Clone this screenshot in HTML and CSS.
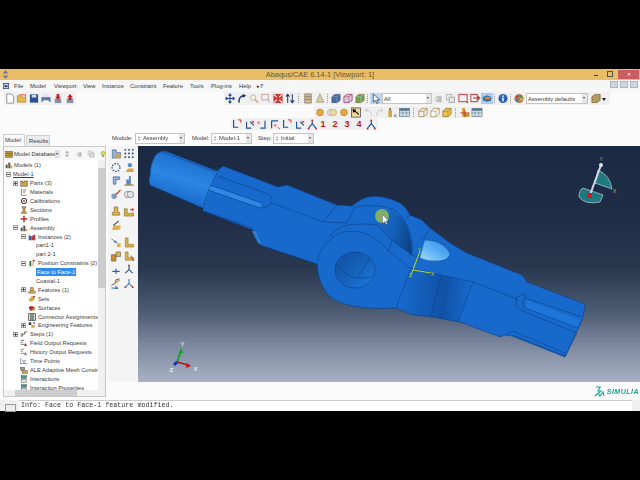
FILE: index.html
```html
<!DOCTYPE html>
<html lang="en">
<head>
<meta charset="utf-8">
<title>Abaqus/CAE</title>
<link rel="stylesheet" href="styles.css">
</head>
<body>
<svg class="defs" width="0" height="0">
<defs>
<symbol id="new" viewBox="0 0 12 12"><path d="M2.500 1h5l2.500 2.500V11h-7.500z" fill="#fff" stroke="#8a8f98"/></symbol>
<symbol id="open" viewBox="0 0 12 12"><path d="M1 3h4l1 1.500h4V10H1z" fill="#e9b949" stroke="#a67a1f" stroke-width=".7"/><path d="M3 2h7v2" fill="none" stroke="#d5482b"/></symbol>
<symbol id="save" viewBox="0 0 12 12"><rect x="1.500" y="1.500" width="9" height="9" fill="#2c4f92"/><rect x="3.500" y="2" width="5" height="3" fill="#cfd8ea"/></symbol>
<symbol id="print" viewBox="0 0 12 12"><rect x="1" y="4.500" width="10" height="5" fill="#5876aa"/><rect x="3" y="1.500" width="6" height="3" fill="#dfe4ee"/><rect x="3" y="8" width="6" height="2.500" fill="#fff"/></symbol>
<symbol id="imp" viewBox="0 0 12 12"><rect x="2.500" y="6" width="7" height="5" fill="#8a8fa8"/><path d="M4.500 1h3v3h1.500L6 7.500 3 4h1.500z" fill="#c8201f"/></symbol>
<symbol id="exp" viewBox="0 0 12 12"><rect x="2.500" y="6" width="7" height="5" fill="#8a8fa8"/><path d="M4.500 7.500h3v-3h1.500L6 1 3 4.500h1.500z" fill="#c8201f"/></symbol>
<symbol id="pan" viewBox="0 0 12 12"><path d="M6 1v10M1 6h10M6 1L4.500 3M6 1l1.500 2M6 11l-1.500-2M6 11l1.500-2M1 6l2-1.500M1 6l2 1.500M11 6L9 4.500M11 6L9 7.500" stroke="#1f3f8f" fill="none" stroke-width="1.100"/></symbol>
<symbol id="rot" viewBox="0 0 12 12"><path d="M3 10.500C2 6 4.500 3 8 3" stroke="#17306e" stroke-width="1.500" fill="none"/><path d="M7 .8l3.500 2.200L7 5.300z" fill="#17306e"/></symbol>
<symbol id="mag" viewBox="0 0 12 12"><circle cx="5" cy="5" r="3" fill="#f4f0dc" stroke="#b9b9b9"/><path d="M7 7l3.500 3.500" stroke="#c4a868" stroke-width="1.500"/></symbol>
<symbol id="box" viewBox="0 0 12 12"><rect x="1.500" y="1.500" width="7" height="6" fill="none" stroke="#c4a0a0"/><path d="M7 7l3.500 3.500" stroke="#b9b9b9" stroke-width="1.300"/></symbol>
<symbol id="fit" viewBox="0 0 12 12"><rect x="1" y="1" width="10" height="10" fill="#d33a33"/><path d="M1.500 1.500l3 3M10.500 1.500l-3 3M1.500 10.500l3-3M10.500 10.500l-3-3" stroke="#fff" stroke-width="1.200"/></symbol>
<symbol id="updn" viewBox="0 0 12 12"><path d="M3.500 11V2M1.500 4l2-2.500 2 2.500M8.500 1v9M6.500 8l2 2.500 2-2.500" stroke="#1d3774" fill="none" stroke-width="1.100"/></symbol>
<symbol id="bars" viewBox="0 0 12 12"><rect x="2.500" y="1" width="7" height="10" fill="#c9b896" stroke="#80704e" stroke-width=".7"/><path d="M2.500 4h7M2.500 7h7" stroke="#80704e" stroke-width=".7"/></symbol>
<symbol id="wedge" viewBox="0 0 12 12"><path d="M6 1l4 9H2z" fill="#dbcda8" stroke="#8f8468" stroke-width=".7"/></symbol>
<symbol id="cube1" viewBox="0 0 12 12"><path d="M1.500 4L5 1.500h5.500V8L7 10.500H1.500z" fill="#4d6aa3" stroke="#2d4170" stroke-width=".6"/><path d="M1.500 4H7v6.500M7 4l3.500-2.500" stroke="#9fb1d0" stroke-width=".5" fill="none"/></symbol>
<symbol id="cube2" viewBox="0 0 12 12"><path d="M1.500 4L5 1.500h5.500V8L7 10.500H1.500z" fill="#d8c6d8" stroke="#a3406f" stroke-width=".9"/><path d="M1.500 4H7v6.500M7 4l3.500-2.500" stroke="#a3406f" stroke-width=".6" fill="none"/></symbol>
<symbol id="cube3" viewBox="0 0 12 12"><path d="M1.500 4L5 1.500h5.500V8L7 10.500H1.500z" fill="#6ea05a" stroke="#8a6a2a" stroke-width=".7"/><path d="M1.500 4H7v6.500M7 4l3.500-2.500" stroke="#c8d8a0" stroke-width=".5" fill="none"/></symbol>
<symbol id="arrow" viewBox="0 0 12 12"><path d="M3 1v9l2.300-2 1.700 3.500 1.500-.7L6.800 7.500H10z" fill="#fff" stroke="#26344e" stroke-width=".8"/></symbol>
<symbol id="gray" viewBox="0 0 12 12"><rect x="4" y="3.500" width="6" height="6.500" fill="#bdbdbd"/><rect x="2" y="5" width="4" height="3" fill="#dcdcdc"/></symbol>
<symbol id="layers" viewBox="0 0 12 12"><rect x="1.500" y="1.500" width="6" height="6" fill="#efefef" stroke="#aaa" stroke-width=".8"/><rect x="4.500" y="4.500" width="6" height="6" fill="#e4e4e4" stroke="#999" stroke-width=".8"/></symbol>
<symbol id="rbox" viewBox="0 0 12 12"><rect x="1.500" y="1.500" width="9" height="8" fill="none" stroke="#bb3333"/><path d="M10 10.500h1.500" stroke="#333"/></symbol>
<symbol id="rboxa" viewBox="0 0 12 12"><rect x="1.500" y="1.500" width="7" height="8" fill="none" stroke="#bb3333"/><path d="M4 5.500h7M9 3.500l2 2-2 2" stroke="#b03020" stroke-width="1.100" fill="none"/></symbol>
<symbol id="eye" viewBox="0 0 12 12"><path d="M1 4.500L6 2.500l5 2-1 4-4 1-4-1z" fill="#3a6fa8"/><path d="M2.500 5.500L7 4l3 1.500-3 2z" fill="#e09030"/><path d="M4 7.500l5-.5" stroke="#c03030" stroke-width=".8"/></symbol>
<symbol id="info" viewBox="0 0 12 12"><circle cx="6" cy="6" r="5" fill="#2a63b4"/><rect x="5.200" y="5" width="1.600" height="4" fill="#fff"/><rect x="5.200" y="2.700" width="1.600" height="1.500" fill="#fff"/></symbol>
<symbol id="palette" viewBox="0 0 12 12"><path d="M1 6c0-3 2.500-5 5.500-5S11 3.500 11 6s-1.500 5-4.500 5S1 9 1 6z" fill="#a8845c"/><circle cx="4" cy="4" r="1.300" fill="#d83030"/><circle cx="7.500" cy="3.500" r="1.200" fill="#3a9a3a"/><circle cx="3.700" cy="7.500" r="1.200" fill="#2a5fc4"/><circle cx="8.500" cy="7" r="1.300" fill="#e8c030"/></symbol>
<symbol id="cubeb" viewBox="0 0 12 12"><path d="M1.500 4L5 1.500h5.500V8L7 10.500H1.500z" fill="#b39a5e" stroke="#6e5c30" stroke-width=".7"/></symbol>
<symbol id="ball" viewBox="0 0 12 12"><circle cx="6" cy="6" r="3.700" fill="#e8a63c" stroke="#a87820" stroke-width=".6"/></symbol>
<symbol id="balls" viewBox="0 0 12 12"><circle cx="4.500" cy="6" r="3.500" fill="#e0e0e0" stroke="#999" stroke-width=".6"/><circle cx="7.500" cy="6" r="3.500" fill="#f0d9a0" stroke="#b89640" stroke-width=".6"/></symbol>
<symbol id="pick" viewBox="0 0 12 12"><rect x="1" y="1" width="10" height="10" fill="#f2d79a" stroke="#444" stroke-width=".8"/><path d="M2.500 2.500L9 8M3 3l3 .3M3 3l.3 3" stroke="#111" stroke-width="1.300" fill="none"/></symbol>
<symbol id="undo" viewBox="0 0 12 12"><path d="M9.500 9.500C10 5 7 3 3 3.500M3 3.500l2-2M3 3.500l2 2" stroke="#c4c4c4" fill="none"/></symbol>
<symbol id="redo" viewBox="0 0 12 12"><path d="M2.500 9.500C2 5 5 3 9 3.500M9 3.500l-2-2M9 3.500l-2 2" stroke="#c4c4c4" fill="none"/></symbol>
<symbol id="bottle" viewBox="0 0 12 12"><rect x="2" y="4" width="4" height="7" fill="#d6a63e"/><rect x="3" y="1" width="2" height="3" fill="#8a6a2a"/><rect x="8" y="8" width="3" height="3" fill="#aaa"/></symbol>
<symbol id="grid" viewBox="0 0 12 12"><rect x=".5" y="1.500" width="11" height="9" fill="#d9e2ea" stroke="#627a8c" stroke-width=".7"/><rect x=".5" y="1.500" width="11" height="2.500" fill="#53708c"/><path d="M.5 6.500h11M4 4v6M8 4v6" stroke="#627a8c" stroke-width=".6"/></symbol>
<symbol id="wire" viewBox="0 0 12 12"><path d="M1.500 4.500L5 1.500h5.500v6L7 10.500H1.500zM1.500 4.500H7v6M7 4.500l3.500-3" fill="none" stroke="#a78d55" stroke-width=".9"/></symbol>
<symbol id="wire2" viewBox="0 0 12 12"><path d="M1.500 4.500L5 1.500h5.500v6L7 10.500H1.500z" fill="#fff" stroke="#a78d55" stroke-width=".9"/><path d="M1.500 4.500H7v6M7 4.500l3.500-3" fill="none" stroke="#a78d55" stroke-width=".7"/></symbol>
<symbol id="solid" viewBox="0 0 12 12"><path d="M1.500 4.500L5 1.500h5.500v6L7 10.500H1.500z" fill="#eec248" stroke="#98782a" stroke-width=".9"/><path d="M1.500 4.500H7v6M7 4.500l3.500-3" fill="none" stroke="#98782a" stroke-width=".6"/></symbol>
<symbol id="lshape" viewBox="0 0 12 12"><path d="M3 1h3v6h5v3.500H3z" fill="#c99832"/><path d="M1 6.500h10M6 4v7" stroke="#c93020" stroke-width="1"/></symbol>
<symbol id="tri" viewBox="0 0 12 12"><path d="M6 5v-3M6 5L2 10M6 5l4 5" stroke="#1f4f9f" fill="none" stroke-width="1.200"/><circle cx="6" cy="1.500" r="1" fill="#c42020"/><circle cx="2" cy="10.500" r="1" fill="#c42020"/><circle cx="10" cy="10.500" r="1" fill="#c42020"/></symbol>
<symbol id="tparts" viewBox="0 0 12 12"><path d="M1 3h3v2h2V3h5v8H1z" fill="#d6a63e" stroke="#333" stroke-width=".7"/></symbol>
<symbol id="tmat" viewBox="0 0 12 12"><path d="M2 1v10h8M4 3h5M4 6h4" stroke="#555" fill="none"/><path d="M6 8l3-6" stroke="#c79a4a"/></symbol>
<symbol id="tcal" viewBox="0 0 12 12"><circle cx="6" cy="6" r="4" fill="none" stroke="#333" stroke-width="1.500"/><circle cx="6" cy="6" r="1.500" fill="#c03030"/></symbol>
<symbol id="tsec" viewBox="0 0 12 12"><path d="M3 1h6L7 6l3 5H2l3-5z" fill="#caa04a" stroke="#333" stroke-width=".7"/></symbol>
<symbol id="tpro" viewBox="0 0 12 12"><path d="M6 1v10M1 6h10" stroke="#b33" stroke-width="2.400"/></symbol>
<symbol id="tasm" viewBox="0 0 12 12"><path d="M1 11V6l3-1v6zM5 11V2l3 1v8z" fill="#555"/><path d="M8 11V7h3v4z" fill="#d6a63e"/></symbol>
<symbol id="tins" viewBox="0 0 12 12"><path d="M1 11V3l4 2v6z" fill="#3a5fa8"/><path d="M5 11V5l6-3v9z" fill="#b83a4a"/></symbol>
<symbol id="tpos" viewBox="0 0 12 12"><path d="M2 11V3h3v8z" fill="#2f8a4a"/><path d="M7 11V1h3v3H8v7z" fill="#c9562a"/></symbol>
<symbol id="tfea" viewBox="0 0 12 12"><path d="M4 2h4l1 5H3z" fill="#d6a63e" stroke="#555" stroke-width=".6"/><path d="M1 8h10v3H1z" fill="#c9a86a" stroke="#555" stroke-width=".6"/></symbol>
<symbol id="tset" viewBox="0 0 12 12"><path d="M1 6l3-1 1-3 5 1-1 5-6 2z" fill="#dba02e"/><path d="M7 2l4-1-2 4z" fill="#c03030"/></symbol>
<symbol id="tsur" viewBox="0 0 12 12"><path d="M1 4l5-1 4 2-1 4-6 1z" fill="#b82a2a"/><path d="M7 6l4 1-1 3-3-1z" fill="#c79a2a"/></symbol>
<symbol id="tcon" viewBox="0 0 12 12"><rect x="1" y="1" width="10" height="10" fill="#d5dbd5" stroke="#333"/><path d="M3 3h6M3 6h6M3 9h6" stroke="#222" stroke-width="1.300"/></symbol>
<symbol id="teng" viewBox="0 0 12 12"><rect x="1" y="2" width="4" height="4" fill="#444"/><rect x="5" y="6" width="5" height="4" fill="#c9a24a"/><circle cx="9" cy="3" r="1.500" fill="#777"/></symbol>
<symbol id="tstep" viewBox="0 0 12 12"><path d="M1 9h3V6h3V3h4" stroke="#444" fill="none" stroke-width="1.200"/><circle cx="2" cy="6" r="1.300" fill="#888"/></symbol>
<symbol id="tfld" viewBox="0 0 12 12"><path d="M1 2h5M1 5h3M1 8h6" stroke="#444" stroke-width="1.100"/><path d="M6 11l2-5 3 4z" fill="#b33"/></symbol>
<symbol id="thist" viewBox="0 0 12 12"><path d="M1 2h5M1 5h3M1 8h6" stroke="#a44" stroke-width="1.100"/><path d="M6 11l2-5 3 4z" fill="#888"/></symbol>
<symbol id="ttime" viewBox="0 0 12 12"><path d="M1 2v8h10" stroke="#3a5fa8" fill="none"/><path d="M3 5h2v3h2V5h2" stroke="#777" fill="none"/></symbol>
<symbol id="tale" viewBox="0 0 12 12"><rect x="1" y="2" width="6" height="4" fill="#9a9a9a" stroke="#333" stroke-width=".6"/><rect x="3" y="7" width="8" height="4" fill="#c9a24a" stroke="#333" stroke-width=".6"/></symbol>
<symbol id="tint" viewBox="0 0 12 12"><rect x="2" y="1" width="8" height="4" fill="#4a9a8a" stroke="#333" stroke-width=".6"/><rect x="2" y="7" width="8" height="4" fill="#dfe6e0" stroke="#333" stroke-width=".6"/></symbol>
<symbol id="db" viewBox="0 0 12 12"><rect x="1" y="2" width="10" height="9" fill="#c9a03a" stroke="#444" stroke-width=".7"/><path d="M1 5h10M1 8h10" stroke="#444" stroke-width=".8"/></symbol>
<symbol id="spin" viewBox="0 0 12 12"><path d="M3 5l3-4 3 4zM3 7l3 4 3-4z" fill="#a8a8a8"/></symbol>
<symbol id="bulb" viewBox="0 0 12 12"><circle cx="6" cy="5" r="3" fill="#d8e04a" stroke="#8a8a2a" stroke-width=".6"/><rect x="5" y="8" width="2" height="2.500" fill="#666"/><path d="M6 0v1M1 5h1M10 5h1" stroke="#b8b860" stroke-width=".7"/></symbol>
<symbol id="tb1" viewBox="0 0 12 12"><path d="M2 11V2h4l1 3h4v6z" fill="#8fb0d8" stroke="#52688a" stroke-width=".7"/><path d="M6 7h5v4H6z" fill="#d6a63e"/></symbol>
<symbol id="tb2" viewBox="0 0 12 12"><g fill="#1f3f7f"><circle cx="2" cy="2" r="1"/><circle cx="6" cy="2" r="1"/><circle cx="10" cy="2" r="1"/><circle cx="2" cy="6" r="1"/><circle cx="6" cy="6" r="1"/><circle cx="10" cy="6" r="1"/><circle cx="2" cy="10" r="1"/><circle cx="6" cy="10" r="1"/><circle cx="10" cy="10" r="1"/></g></symbol>
<symbol id="tb3" viewBox="0 0 12 12"><circle cx="6" cy="6" r="4.300" fill="none" stroke="#1f3f7f" stroke-width="1.300" stroke-dasharray="1.600 1.400"/></symbol>
<symbol id="tb4" viewBox="0 0 12 12"><path d="M2 11l3-4h6v4z" fill="#d6a63e"/><circle cx="7" cy="3.500" r="2.300" fill="#5a8ac8"/></symbol>
<symbol id="tb5" viewBox="0 0 12 12"><path d="M3 10V2h7v3H6v5z" fill="#8fb0d8" stroke="#40608f" stroke-width=".7"/></symbol>
<symbol id="tb6" viewBox="0 0 12 12"><path d="M3 11V5h3V1h2v10z" fill="#5a8ac8"/><path d="M1 11h10" stroke="#b88a2a" stroke-width="1.500"/></symbol>
<symbol id="tb7" viewBox="0 0 12 12"><circle cx="4" cy="8" r="3" fill="#8098c0"/><path d="M6 6l5-5" stroke="#c03030" stroke-width="1.300"/></symbol>
<symbol id="tb8" viewBox="0 0 12 12"><circle cx="4.500" cy="6" r="3.500" fill="none" stroke="#8a8a8a"/><circle cx="7.500" cy="6" r="3.500" fill="#dde4ee" stroke="#8a8a8a"/></symbol>
<symbol id="tb9" viewBox="0 0 12 12"><path d="M4 1h4v6h2v3H2V7h2z" fill="#dcb248" stroke="#8a6a2a" stroke-width=".7"/></symbol>
<symbol id="tb10" viewBox="0 0 12 12"><path d="M1 3h3v5h7v3H1z" fill="#dcb248" stroke="#8a6a2a" stroke-width=".7"/><path d="M7 4h4M9 2l2 2-2 2" stroke="#c03030" fill="none"/></symbol>
<symbol id="tb11" viewBox="0 0 12 12"><path d="M2 9l2-3h7v3l-2 2H2z" fill="#dcb248"/><path d="M3 6l6-5" stroke="#555" stroke-width="1.300"/></symbol>
<symbol id="tb12" viewBox="0 0 12 12"><path d="M1 2l4 3 3 2" stroke="#556a8a" stroke-dasharray="2 1"/><circle cx="5" cy="5" r="1.300" fill="#3a7ac8"/><path d="M7 11V7h4v4z" fill="#dcb248"/></symbol>
<symbol id="tb13" viewBox="0 0 12 12"><path d="M2 1h3v7h6v3H2z" fill="#dcb248" stroke="#8a6a2a" stroke-width=".6"/></symbol>
<symbol id="tb14" viewBox="0 0 12 12"><path d="M1 4h5v7H1z" fill="#c98a2a" stroke="#555" stroke-width=".6"/><path d="M6 1h5v5H6z" fill="#dcb248" stroke="#555" stroke-width=".6"/></symbol>
<symbol id="tb15" viewBox="0 0 12 12"><path d="M2 1h3v6h6v3H2z" fill="#dcb248" stroke="#8a6a2a" stroke-width=".6"/><path d="M8 5l3 6" stroke="#c03030"/></symbol>
<symbol id="tb16" viewBox="0 0 12 12"><path d="M6 5v6M2 8h8" stroke="#1f5fbf" stroke-width="1.200"/></symbol>
<symbol id="tb17" viewBox="0 0 12 12"><path d="M6 1v5M6 6l-4 4M6 6l4 4" stroke="#1f3f7f" stroke-width="1.100"/><circle cx="6" cy="1.500" r="1" fill="#c03030"/></symbol>
<symbol id="tb18" viewBox="0 0 12 12"><path d="M1 8l4-2 1-4 4-1" stroke="#555" fill="none"/><path d="M1 11h7M5 9l3 2-3 1" stroke="#1f5fbf" fill="none"/><path d="M6 5l4-3" stroke="#d6a63e" stroke-width="1.500"/></symbol>
<symbol id="tb19" viewBox="0 0 12 12"><path d="M6 1v5M6 6l-4 4M6 6l4 4" stroke="#2f6fcf" stroke-width="1.100"/><circle cx="2" cy="10" r="1" fill="#c03030"/><circle cx="10" cy="10" r="1" fill="#c03030"/></symbol>
<symbol id="rz1" viewBox="0 0 12 12"><path d="M2 1v8h5" stroke="#1f4f9f" fill="none" stroke-width="1.300"/><path d="M7 1h3M10 1v3" stroke="#c42020"/></symbol>
<symbol id="rz2" viewBox="0 0 12 12"><path d="M2 3v7h5M6 3l4 4" stroke="#1f4f9f" fill="none" stroke-width="1.200"/><path d="M8 2l2 2M10 2L8 4" stroke="#c42020"/></symbol>
<symbol id="rz3" viewBox="0 0 12 12"><path d="M4 10h5V2" stroke="#1f4f9f" fill="none" stroke-width="1.300"/><path d="M1 3l2 2M3 3L1 5" stroke="#c42020"/></symbol>
<symbol id="rz4" viewBox="0 0 12 12"><path d="M2 2v8M2 2h7" stroke="#1f4f9f" fill="none" stroke-width="1.300"/><path d="M5 6l2 2M7 6L5 8" stroke="#c42020"/><path d="M9 9l2 2" stroke="#c42020"/></symbol>
</defs>
</svg>

<div class="app">
  <header class="titlebar">
    <svg class="ticon" viewBox="0 0 10 10"><path d="M5 0l3 4H2zM5 10L2 6h6z" fill="#6a78b8"/></svg>
    <span class="ttext">Abaqus/CAE 6.14-1 [Viewport: 1]</span>
    <div class="wbtns">
      <span class="wmin"></span>
      <span class="wres"></span>
      <span class="wclose">✕</span>
    </div>
  </header>

  <nav class="menubar">
    <svg class="mico" viewBox="0 0 8 8"><rect x=".5" y=".5" width="7" height="7" fill="#cdd8ec" stroke="#2b3f80"/><rect x="2" y="3" width="4" height="2.500" fill="#2b3f80"/></svg>
    <span class="m m-file">File</span><span class="m m-model">Model</span><span class="m m-vp">Viewport</span><span class="m m-view">View</span><span class="m m-inst">Instance</span><span class="m m-con">Constraint</span><span class="m m-fea">Feature</span><span class="m m-tool">Tools</span><span class="m m-plug">Plug-ins</span><span class="m m-help">Help</span><span class="m m-q">▸?</span>
    <div class="mdi"><span></span><span></span><span></span></div>
  </nav>

  <div class="tbrow row1">
    <div class="grp g-file">
      <svg class="ic"><use href="#new"/></svg><svg class="ic"><use href="#open"/></svg><svg class="ic"><use href="#save"/></svg><svg class="ic"><use href="#print"/></svg><svg class="ic"><use href="#imp"/></svg><svg class="ic"><use href="#exp"/></svg>
    </div>
    <div class="grp g-view">
      <svg class="ic"><use href="#pan"/></svg><svg class="ic"><use href="#rot"/></svg><svg class="ic"><use href="#mag"/></svg><svg class="ic"><use href="#box"/></svg><svg class="ic"><use href="#fit"/></svg><svg class="ic"><use href="#updn"/></svg>
      <span class="grip"></span>
      <svg class="ic"><use href="#bars"/></svg><svg class="ic"><use href="#wedge"/></svg>
      <span class="grip g4"></span>
      <svg class="ic"><use href="#cube1"/></svg><svg class="ic"><use href="#cube2"/></svg><svg class="ic"><use href="#cube3"/></svg>
      <span class="grip g4"></span>
      <svg class="ic on"><use href="#arrow"/></svg>
      <div class="combo c-all"><span>All</span><i class="dd"></i></div>
      <svg class="ic"><use href="#gray"/></svg><svg class="ic wide"><use href="#layers"/></svg><svg class="ic"><use href="#rbox"/></svg><svg class="ic"><use href="#rboxa"/></svg><svg class="ic on2"><use href="#eye"/></svg>
      <span class="grip g4"></span>
      <svg class="ic"><use href="#info"/></svg>
      <span class="grip g4"></span>
      <svg class="ic"><use href="#palette"/></svg>
      <div class="combo c-def"><span>Assembly defaults</span><i class="dd"></i></div>
      <svg class="ic"><use href="#cubeb"/></svg>
      <i class="caret"></i>
    </div>
  </div>

  <div class="tbrow row2">
    <div class="grp g-r2">
      <svg class="ic"><use href="#ball"/></svg><svg class="ic"><use href="#balls"/></svg><svg class="ic"><use href="#ball"/></svg><svg class="ic"><use href="#pick"/></svg><svg class="ic"><use href="#undo"/></svg><svg class="ic"><use href="#redo"/></svg><svg class="ic"><use href="#bottle"/></svg><svg class="ic wide2"><use href="#grid"/></svg>
      <span class="grip"></span>
      <svg class="ic"><use href="#wire"/></svg><svg class="ic"><use href="#wire2"/></svg><svg class="ic"><use href="#solid"/></svg>
      <span class="grip"></span>
      <svg class="ic"><use href="#lshape"/></svg><svg class="ic"><use href="#grid"/></svg>
    </div>
  </div>

  <div class="tbrow row3">
    <div class="grp g-r3">
      <svg class="ic"><use href="#rz1"/></svg><svg class="ic"><use href="#rz2"/></svg><svg class="ic"><use href="#rz3"/></svg><svg class="ic"><use href="#rz4"/></svg><svg class="ic"><use href="#rz1"/></svg><svg class="ic"><use href="#rz2"/></svg><svg class="ic"><use href="#tri"/></svg>
      <b class="num">1</b><b class="num">2</b><b class="num">3</b><b class="num">4</b>
      <svg class="ic"><use href="#tri"/></svg>
    </div>
  </div>

  <div class="work">
    <aside class="left">
      <div class="tabs">
        <span class="tab active">Model</span><span class="tab">Results</span>
      </div>
      <div class="panel">
        <div class="dbrow">
          <svg class="ic9"><use href="#db"/></svg>
          <span class="dbname">Model Database</span>
          <i class="dd small"></i>
          <svg class="ic9 sp1"><use href="#spin"/></svg>
          <svg class="ic9 sp2"><use href="#gray"/></svg>
          <svg class="ic9 sp2"><use href="#layers"/></svg>
          <svg class="ic9 sp2"><use href="#bulb"/></svg>
        </div>
        <div class="treewrap">
          <div class="tree">
            <div class="row d0"><svg class="ti"><use href="#tasm"/></svg><span>Models (1)</span></div>
            <div class="row d1"><i class="ex minus"></i><span class="ul">Model-1</span></div>
            <div class="row d2"><i class="ex plus"></i><svg class="ti"><use href="#tparts"/></svg><span>Parts (3)</span></div>
            <div class="row d2"><i class="ex none"></i><svg class="ti"><use href="#tmat"/></svg><span>Materials</span></div>
            <div class="row d2"><i class="ex none"></i><svg class="ti"><use href="#tcal"/></svg><span>Calibrations</span></div>
            <div class="row d2"><i class="ex none"></i><svg class="ti"><use href="#tsec"/></svg><span>Sections</span></div>
            <div class="row d2"><i class="ex none"></i><svg class="ti"><use href="#tpro"/></svg><span>Profiles</span></div>
            <div class="row d2"><i class="ex minus"></i><svg class="ti"><use href="#tasm"/></svg><span>Assembly</span></div>
            <div class="row d3"><i class="ex minus"></i><svg class="ti"><use href="#tins"/></svg><span>Instances (2)</span></div>
            <div class="row d4"><span>part1-1</span></div>
            <div class="row d4"><span>part 2-1</span></div>
            <div class="row d3"><i class="ex minus"></i><svg class="ti"><use href="#tpos"/></svg><span>Position Constraints (2)</span></div>
            <div class="row d4"><span class="sel">Face to Face-1</span></div>
            <div class="row d4"><span>Coaxial-1</span></div>
            <div class="row d3"><i class="ex plus"></i><svg class="ti"><use href="#tfea"/></svg><span>Features (1)</span></div>
            <div class="row d3"><i class="ex none"></i><svg class="ti"><use href="#tset"/></svg><span>Sets</span></div>
            <div class="row d3"><i class="ex none"></i><svg class="ti"><use href="#tsur"/></svg><span>Surfaces</span></div>
            <div class="row d3"><i class="ex none"></i><svg class="ti"><use href="#tcon"/></svg><span>Connector Assignments</span></div>
            <div class="row d3"><i class="ex plus"></i><svg class="ti"><use href="#teng"/></svg><span>Engineering Features</span></div>
            <div class="row d2"><i class="ex plus"></i><svg class="ti"><use href="#tstep"/></svg><span>Steps (1)</span></div>
            <div class="row d2"><i class="ex none"></i><svg class="ti"><use href="#tfld"/></svg><span>Field Output Requests</span></div>
            <div class="row d2"><i class="ex none"></i><svg class="ti"><use href="#thist"/></svg><span>History Output Requests</span></div>
            <div class="row d2"><i class="ex none"></i><svg class="ti"><use href="#ttime"/></svg><span>Time Points</span></div>
            <div class="row d2"><i class="ex none"></i><svg class="ti"><use href="#tale"/></svg><span>ALE Adaptive Mesh Constraints</span></div>
            <div class="row d2"><i class="ex none"></i><svg class="ti"><use href="#tint"/></svg><span>Interactions</span></div>
            <div class="row d2"><i class="ex none"></i><svg class="ti"><use href="#tint"/></svg><span>Interaction Properties</span></div>
          </div>
          <div class="vbar"><i class="vthumb"></i></div>
        </div>
        <div class="hbar"><i class="hthumb"></i></div>
      </div>
    </aside>

    <section class="right">
      <div class="modrow">
        <span class="lbl l-mod">Module:</span>
        <div class="combo c-mod"><svg class="spin"><use href="#spin"/></svg><span>Assembly</span><i class="dd"></i></div>
        <span class="lbl l-mdl">Model:</span>
        <div class="combo c-mdl"><svg class="spin"><use href="#spin"/></svg><span>Model-1</span><i class="dd"></i></div>
        <span class="lbl l-stp">Step:</span>
        <div class="combo c-stp"><svg class="spin"><use href="#spin"/></svg><span>Initial</span><i class="dd"></i></div>
      </div>
      <div class="mid">
        <div class="toolbox">
          <div class="tgrp">
            <svg class="ic"><use href="#tb1"/></svg><svg class="ic"><use href="#tb2"/></svg>
            <svg class="ic"><use href="#tb3"/></svg><svg class="ic"><use href="#tb4"/></svg>
            <svg class="ic"><use href="#tb5"/></svg><svg class="ic"><use href="#tb6"/></svg>
            <svg class="ic"><use href="#tb7"/></svg><svg class="ic"><use href="#tb8"/></svg>
          </div>
          <div class="tgrp">
            <svg class="ic"><use href="#tb9"/></svg><svg class="ic"><use href="#tb10"/></svg>
            <svg class="ic"><use href="#tb11"/></svg>
          </div>
          <div class="tgrp">
            <svg class="ic"><use href="#tb12"/></svg><svg class="ic"><use href="#tb13"/></svg>
            <svg class="ic"><use href="#tb14"/></svg><svg class="ic"><use href="#tb15"/></svg>
            <svg class="ic"><use href="#tb16"/></svg><svg class="ic"><use href="#tb17"/></svg>
            <svg class="ic"><use href="#tb18"/></svg><svg class="ic"><use href="#tb19"/></svg>
          </div>
        </div>
        <div class="viewport">
          <svg class="scene" viewBox="138 146 502 236">
            <defs>
              <linearGradient id="cyl" gradientUnits="userSpaceOnUse" x1="180" y1="152" x2="167" y2="196">
                <stop offset="0" stop-color="#1a6ccc"/><stop offset=".55" stop-color="#2b86e4"/><stop offset="1" stop-color="#1a6ccc"/>
              </linearGradient>
              <linearGradient id="cut" gradientUnits="userSpaceOnUse" x1="372" y1="225" x2="412" y2="236">
                <stop offset="0" stop-color="#1769cc"/><stop offset=".5" stop-color="#1462bc"/><stop offset="1" stop-color="#0d4488"/>
              </linearGradient>
              <linearGradient id="lite" x1="0" y1="1" x2="1" y2="0">
                <stop offset="0" stop-color="#a8deff"/><stop offset=".45" stop-color="#5fb4f6"/><stop offset="1" stop-color="#2a82e0"/>
              </linearGradient>
              <linearGradient id="holeg" x1="0" y1="0" x2="1" y2="1">
                <stop offset="0" stop-color="#0f4e9c"/><stop offset=".55" stop-color="#1664be"/><stop offset="1" stop-color="#1c7ae0"/>
              </linearGradient>
              <linearGradient id="band" gradientUnits="userSpaceOnUse" x1="400" y1="295" x2="470" y2="300">
                <stop offset="0" stop-color="#1769cc"/><stop offset=".5" stop-color="#1156ac"/><stop offset=".62" stop-color="#1052a4"/><stop offset="1" stop-color="#1769cc"/>
              </linearGradient>
            </defs>
            <path class="part" d="M165 151L217 171L223 166L278 187L287 185L337 205L352 206Q360 199 368 197Q382 194 400 203Q407 208 410 215L422 220L430 228L450 243L467 253L522 275L527 282L585 304L583 318L565 357L512 336L505 335L500 337L460 322L433 317L413 315L396 308Q380 309 367 308Q340 306 328 295Q318 282 317 264L260 245L253 230L203 211L203 208L150 185Q148 180 150 176Q150 165 155 156Q159 151 165 151Z"/>
            <path d="M165 151L217 171L203 208L150 185Q148 180 150 176Q150 165 155 156Q159 151 165 151Z" fill="url(#cyl)"/>
            <path d="M410 270L432 273L473 282L458 322L433 317L413 315L396 308Z" fill="url(#band)"/>
            <path d="M365 209Q395 204 407 226Q412 240 412 255L392 240L377 225Z" fill="url(#cut)"/>
            <path d="M425 240Q436 240 443 245Q450 250 450 255Q447 261 438 261Q428 262 420 258Z" fill="url(#lite)"/>
            <path d="M210 185L262 203L260 208L208 190Z" fill="#2e88e6"/>
            <path d="M255 231L261 244L258 243L252 231Z" fill="#3a96ee"/>
            <path d="M527 300L580 320L578 328L525 308Z" fill="#1e76d8"/>
            <g class="edge">
              <path d="M165 151L217 171L223 166L278 187L287 185L337 205L352 206Q360 199 368 197Q382 194 400 203Q407 208 410 215L422 220L430 228L450 243L467 253L522 275L527 282L585 304L583 318L565 357L512 336L505 335L500 337L460 322L433 317L413 315L396 308Q380 309 367 308Q340 306 328 295Q318 282 317 264L260 245L253 230L203 211L203 208L150 185Q148 180 150 176Q150 165 155 156Q159 151 165 151Z"/>
              <path d="M163 152L215 172M217 173L208 191L203 208M204 211L253 228"/>
              <path d="M218 176L265 193M210 185L262 203M208 190L260 208Q272 208 272 200Q272 194 265 193"/>
              <path d="M272 203L310 217L323 222L347 223M337 205L323 222M355 207L347 223"/>
              <path d="M355 207Q378 203 395 210Q407 220 412 240L412 255"/>
              <path d="M330 237Q335 228 347 225Q365 223 377 225L392 240L412 255L420 258"/>
              <path d="M317 263Q320 243 340 233Q352 230 360 232Q375 235 390 252L410 268L432 273L473 282L517 299"/>
              <path d="M392 240L388 252M410 215L406 219M430 228L423 240"/>
              <path d="M425 240Q436 240 443 245Q450 250 450 255Q447 261 438 261Q428 262 420 258"/>
              <path d="M410 270L396 308M441 277L431 317M473 282L458 322"/>
              <path d="M517 297Q514 306 520 310L577 333M525 298L582 317M525 308L578 328M517 297L525 294L526 298M525 298Q521 303 525 308"/>
              <path d="M505 335L513 331L565 353M512 335L565 356M577 333L565 357"/>
            </g>
            <ellipse class="hole" cx="355" cy="270" rx="20" ry="18"/>
            <path d="M337 264Q344 276 357 278Q366 279 373 276M370 258L357 278" class="edge"/>
            <circle cx="382" cy="216" r="7" fill="#8bb65c" opacity=".9"/>
            <path d="M382.500 214.500v9l2-2 2 3 1-.6-1.600-3h2.600z" fill="#fff" stroke="#444" stroke-width=".4"/>
            <g class="ytriad">
              <path d="M413 270L420 251M413 270L431 273M413 270L411 275"/>
            </g>
            <text class="ylab" x="418" y="252">Y</text>
            <text class="ylab" x="431" y="276">X</text>
            <text class="ylab" x="409" y="277">Z</text>
            <path d="M598 170Q610 175 612 189L595 183Z" class="sect"/>
            <path d="M583 188L603 195L600 202Q585 205 579 197Q579 190 583 188Z" class="sect"/>
            <path d="M590 195L601 165" stroke="#d5d9ea" stroke-width="2" fill="none"/>
            <circle cx="601" cy="165" r="2" fill="#dfe2f0"/>
            <rect x="587" y="193" width="5" height="5" fill="#d81818"/>
            <text class="glab" x="599.500" y="161">Y</text>
            <text class="glab" x="613" y="193">X</text>
            <path d="M177 362L181 351" stroke="#16a034" stroke-width="2"/>
            <path d="M181 348l2.500 5h-5z" fill="#16a034"/>
            <path d="M177 362L188 365" stroke="#b81818" stroke-width="1.600"/>
            <path d="M191 366l-5 2 1-5z" fill="#b81818"/>
            <path d="M177 362L174 365" stroke="#1530c0" stroke-width="3"/>
            <text class="wlab" x="180.500" y="346">Y</text>
            <text class="wlab" x="193.500" y="371">X</text>
            <text class="wlab" x="169.500" y="372">Z</text>
          </svg>
        </div>
      </div>
      <div class="logorow">
        <svg class="ds" viewBox="0 0 11 11"><path d="M2 1h5M6 1L4 5h3L5 7M1 10l3-3 2 3 3-4 1 4" fill="none" stroke="#16a394" stroke-width="1.100"/></svg>
        <span class="simulia">SIMULIA</span>
      </div>
    </section>
  </div>

  <footer class="msg">
    <i class="msgicon"></i>
    <div class="msgbox"><span>Info: Face to Face-1 feature modified.</span></div>
  </footer>
</div>
</body>
</html>
```
FILE: styles.css
```css
html, body { margin: 0; background: #000; height: 480px; overflow: hidden; }
body { padding-top: 69px; box-sizing: border-box; font-family: "Liberation Sans", Arial, sans-serif; }
.defs { position: absolute; }
.app { height: 342px; display: flex; flex-direction: column; background: #fbfbfb; color: #3a3a3a; font-size: 6px; filter: blur(.3px); }

.titlebar { height: 11px; flex: none; background: #e9bd66; display: flex; align-items: center; position: relative; }
.ticon { width: 9px; height: 9px; margin-left: 0; position: absolute; left: 1px; top: 1px; }
.ttext { flex: 1; text-align: center; font-size: 7.400px; color: #6a5630; }
.wbtns { position: absolute; right: 1px; top: 0; height: 10px; display: flex; align-items: center; }
.wmin { width: 4px; height: 1.500px; background: #333; margin-top: 3px; margin-right: 9px; }
.wres { width: 4px; height: 4px; border: 1px solid #555; margin-right: 5px; }
.wclose { width: 21px; height: 9px; background: #c95c5e; color: #fff; font-size: 5px; line-height: 9px; text-align: center; }

.menubar { height: 12px; flex: none; background: #f6f6f6; display: flex; align-items: center; font-size: 5.800px; position: relative; }
.mico { width: 6px; height: 6px; margin-left: 3px; }
.m { white-space: nowrap; }
.m-file { margin-left: 5px; width: 16px; }
.m-model { width: 24px; }
.m-vp { width: 29px; }
.m-view { width: 19px; }
.m-inst { width: 28px; }
.m-con { width: 33px; }
.m-fea { width: 27px; }
.m-tool { width: 21px; }
.m-plug { width: 28px; }
.m-help { width: 18px; }
.m-q { font-weight: bold; font-size: 5px; }
.mdi { position: absolute; right: 2px; top: 1px; display: flex; gap: 2px; }
.mdi span { width: 6px; height: 5px; background: #cdd6e2; border: 1px solid #aab4c2; }

.tbrow { flex: none; display: flex; background: #fbfbfb; }
.row1 { height: 14px; }
.row2 { height: 12px; padding-left: 314px; }
.row3 { height: 12px; padding-left: 231px; }
.grp { display: flex; align-items: center; background: #f0f0f0; }
.g-file { margin-left: 4px; height: 13px; }
.g-view { margin-left: 148px; height: 13px; padding-right: 4px; }
.ic { width: 12px; height: 11px; flex: none; display: block; }
.ic.on { background: #bcd7f2; }
.ic.on2 { background: #a9cdee; }
.ic.wide { width: 13px; }
.ic.wide2 { width: 13px; }
.g-r3 .ic { width: 12.500px; }
.grip { width: 2px; height: 9px; margin: 0 2px; flex: none; border-left: 1px dotted #999; box-sizing: border-box; }
.grip.g4 { margin: 0 1px; }
.num { width: 12px; text-align: center; font-size: 9px; color: #c41616; font-family: "Liberation Sans", sans-serif; }
.num:first-of-type { margin-left: -1.500px; }

.combo { display: flex; align-items: center; background: #fff; border: 1px solid #c4c4c4; box-sizing: border-box; height: 11px; font-size: 5.800px; position: relative; flex: none; }
.combo span { flex: 1; padding-left: 1px; white-space: nowrap; }
.dd { width: 5px; height: 9px; flex: none; background: #e6e6e6; position: relative; display: block; }
.dd::after { content: ""; position: absolute; left: 1px; top: 3px; border: 1.500px solid transparent; border-top: 2.500px solid #444; }
.c-all { width: 50px; }
.c-def { width: 62px; margin-left: 1px; margin-right: 2px; }
.caret { width: 0; height: 0; border: 2.500px solid transparent; border-top: 3px solid #222; margin-top: 3px; margin-left: 0; }
.spin { width: 6px; height: 9px; flex: none; }

.work { flex: 1; display: flex; min-height: 0; }
.left { width: 108px; flex: none; padding: 4px 3px 3px; box-sizing: border-box; display: flex; flex-direction: column; }
.tabs { height: 12px; display: flex; flex: none; align-items: flex-end; font-size: 5.800px; }
.tab { height: 10px; line-height: 10px; padding: 0 2px; background: #ececec; border: 1px solid #d0d0d0; border-bottom: none; box-sizing: content-box; width: 18px; white-space: nowrap; }
.tab.active { height: 11px; line-height: 11px; background: #fbfbfb; padding: 0 3px 0 1px; margin-right: 1px; width: 16px; }
.panel { flex: 1; border: 1px solid #c8c8c8; background: #fff; display: flex; flex-direction: column; min-height: 0; width: 101px; box-sizing: content-box; }
.dbrow { height: 13px; flex: none; background: #f7f7f7; display: flex; align-items: center; padding-left: 1px; font-size: 5.800px; }
.ic9 { width: 8px; height: 8px; flex: none; }
.dbname { margin-left: 1px; width: 41px; white-space: nowrap; }
.dd.small { height: 8px; background: #e0e0e0; }
.sp1 { margin-left: 3px; }
.sp2 { margin-left: 4px; }

.treewrap { flex: 1; display: flex; min-height: 0; }
.tree { flex: 1; overflow: hidden; min-width: 0; padding-top: 1px; }
.row { height: 8.900px; display: flex; align-items: center; white-space: nowrap; font-size: 5.700px; box-sizing: border-box; }
.d0 { padding-left: 1px; }
.d1 { padding-left: 1px; }
.d2 { padding-left: 8px; }
.d3 { padding-left: 16px; }
.d4 { padding-left: 32px; }
.ex { width: 8px; flex: none; height: 5px; position: relative; display: block; }
.ex.minus::before, .ex.plus::before { content: ""; position: absolute; left: 1px; top: 0; width: 3px; height: 3px; border: 1px solid #999; background: linear-gradient(#555, #555) center / 3px 1px no-repeat; }
.ex.plus::before { background: linear-gradient(#555, #555) center / 3px 1px no-repeat, linear-gradient(#555, #555) center / 1px 3px no-repeat; }
.ti { width: 8px; height: 8px; flex: none; margin-right: 2px; }
.d0 .ti { margin-right: 1px; }
.ul { text-decoration: underline; }
.sel { background: #2d8df0; color: #fff; padding: 0 1px; line-height: 8px; }
.vbar { width: 7px; flex: none; background: #f0f0f0; position: relative; }
.vthumb { display: block; position: absolute; left: 0; right: 0; top: 8px; height: 120px; background: #cdcdcd; }
.hbar { height: 6px; flex: none; background: #f0f0f0; position: relative; }
.hthumb { display: block; position: absolute; left: 11px; width: 62px; top: 0; height: 6px; background: #cdcdcd; }

.right { flex: 1; min-width: 0; display: flex; flex-direction: column; }
.modrow { height: 16px; flex: none; display: flex; align-items: center; font-size: 5.800px; box-sizing: border-box; }
.lbl { white-space: nowrap; }
.l-mod { margin-left: 4px; width: 23px; }
.c-mod { width: 50px; }
.l-mdl { margin-left: 7px; width: 19px; }
.c-mdl { width: 41px; }
.l-stp { margin-left: 6px; width: 15px; }
.c-stp { width: 41px; }

.mid { height: 236px; flex: none; display: flex; }
.toolbox { width: 30px; flex: none; background: #f4f4f4; box-sizing: border-box; padding: 1px 3px 0 1px; display: flex; flex-direction: column; gap: 4px; }
.tgrp { display: grid; grid-template-columns: 13px 13px; grid-auto-rows: 13.500px; align-items: center; justify-items: center; }
.viewport { flex: 1; min-width: 0; background: linear-gradient(#1b2a42 0%, #1f2d47 30%, #2a3850 52%, #4c5a72 70%, #7e8aa0 85%, #a8b2c4 100%); }
.scene { width: 502px; height: 236px; display: block; }
.part { fill: #1769cc; }
.edge { fill: none; stroke: #0c3a80; stroke-width: .55; }
.hole { fill: url(#holeg); stroke: #0c3a80; stroke-width: .55; }
.ytriad path { stroke: #b8dc20; stroke-width: 1; fill: none; }
.ylab { fill: #b8dc20; font-size: 5px; font-family: "Liberation Sans", sans-serif; }
.sect { fill: #1e7a80; stroke: #c6d0e0; stroke-width: .7; }
.glab { fill: #a8c24a; font-size: 5px; font-family: "Liberation Sans", sans-serif; }
.wlab { fill: #fff; font-size: 6px; font-family: "Liberation Sans", sans-serif; }

.logorow { flex: 1; display: flex; align-items: flex-start; justify-content: flex-end; gap: 2px; padding-top: 4px; background: #fbfbfb; }
.ds { width: 11px; height: 11px; }
.simulia { color: #15a090; font-size: 7px; font-weight: bold; font-style: italic; letter-spacing: .5px; line-height: 11px; margin-right: 1px; }

.msg { height: 11px; flex: none; display: flex; background: #f0f0f0; }
.msgicon { width: 9px; height: 6px; margin: 4px 0 0 5px; background: #eee; border: 1px solid #999; flex: none; }
.msgbox { flex: none; width: 613px; margin-left: 3px; background: #fff; border-top: 1px solid #ccc; box-sizing: border-box; font-family: "Liberation Mono", monospace; font-size: 6.700px; line-height: 8px; padding-left: 2px; color: #333; white-space: pre; }
```
